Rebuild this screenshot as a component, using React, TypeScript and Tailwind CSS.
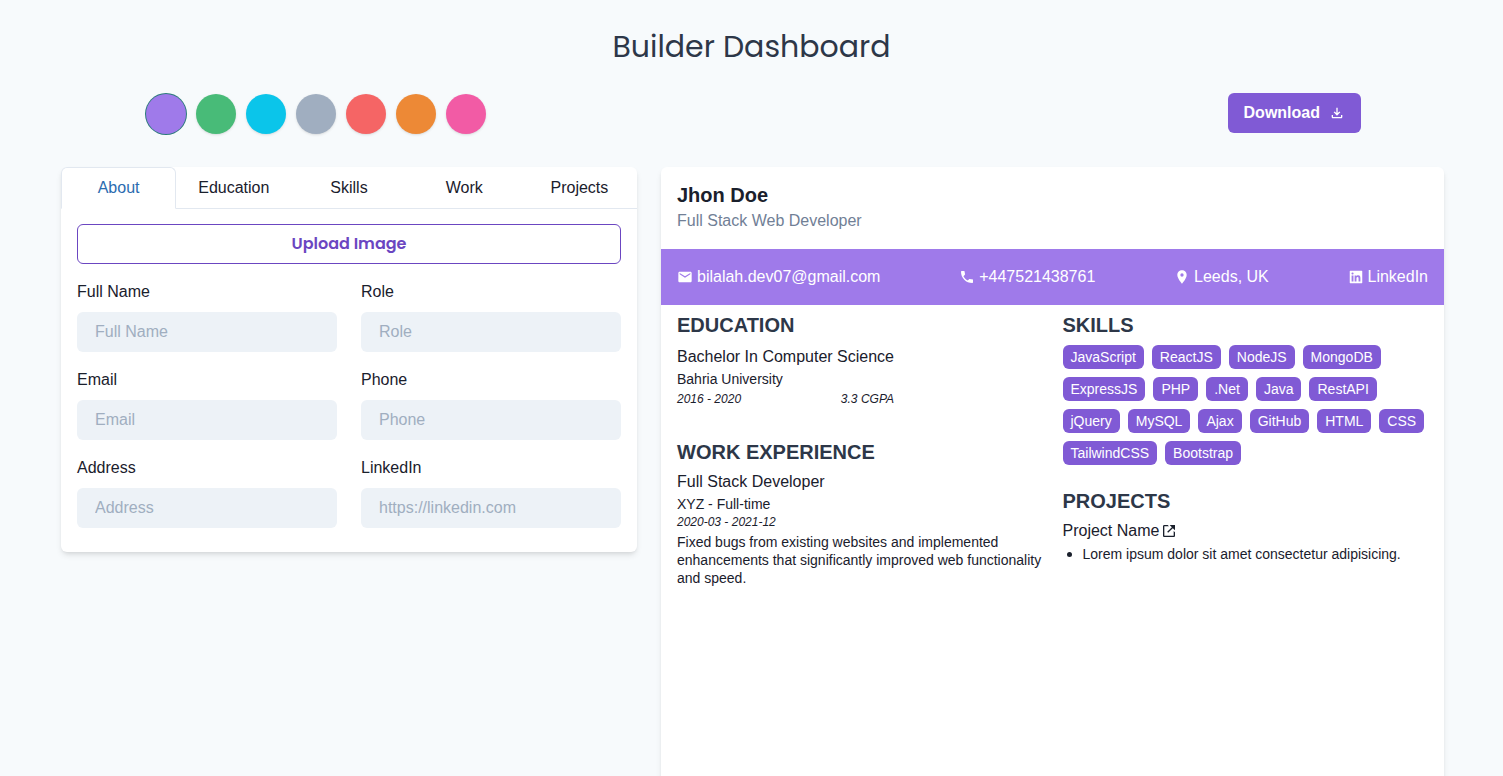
import { useState } from "react";
import { MdEmail, MdPhone, MdLocationOn, MdOutlineFileDownload } from "react-icons/md";
import { AiFillLinkedin } from "react-icons/ai";
import { BiLinkExternal } from "react-icons/bi";

const swatches = [
  { name: "Purple", cls: "bg-[#9f7aea]" },
  { name: "Green", cls: "bg-[#48bb78]" },
  { name: "Cyan", cls: "bg-[#0bc5ea]" },
  { name: "Gray", cls: "bg-[#a0aec0]" },
  { name: "Red", cls: "bg-[#f56565]" },
  { name: "Orange", cls: "bg-[#ed8936]" },
  { name: "Pink", cls: "bg-[#f25ba5]" },
];

const tabs = ["About", "Education", "Skills", "Work", "Projects"];

const fields = [
  { id: "name", label: "Full Name", placeholder: "Full Name", type: "text" },
  { id: "role", label: "Role", placeholder: "Role", type: "text" },
  { id: "email", label: "Email", placeholder: "Email", type: "email" },
  { id: "phone", label: "Phone", placeholder: "Phone", type: "tel" },
  { id: "address", label: "Address", placeholder: "Address", type: "text" },
  { id: "linkedin", label: "LinkedIn", placeholder: "https://linkedin.com", type: "url" },
];

const skills = [
  "JavaScript", "ReactJS", "NodeJS", "MongoDB", "ExpressJS", "PHP", ".Net", "Java", "RestAPI",
  "jQuery", "MySQL", "Ajax", "GitHub", "HTML", "CSS", "TailwindCSS", "Bootstrap",
];

function Toolbar() {
  const [selected, setSelected] = useState(0);
  return (
    <div className="mt-6 flex items-start justify-between pr-[142px] pl-[146px]">
      <div className="flex gap-[10px] pt-px">
        {swatches.map((s, i) => (
          <button
            key={s.name}
            type="button"
            aria-label={s.name}
            aria-pressed={selected === i}
            onClick={() => setSelected(i)}
            className={`size-10 rounded-full ${s.cls} ${selected === i ? "ring-1 ring-[#2c7a7b]" : "shadow-sm"}`}
          />
        ))}
      </div>
      <button type="button" className="flex h-10 items-center gap-[9px] rounded-md bg-[#805ad5] px-4 font-semibold text-white">
        Download
        <MdOutlineFileDownload aria-hidden="true" />
      </button>
    </div>
  );
}

function Editor() {
  const [active, setActive] = useState("About");
  return (
    <section className="rounded-md bg-white pb-6 shadow-md">
      <div role="tablist" className="grid grid-cols-5">
        {tabs.map((t) => (
          <button
            key={t}
            type="button"
            role="tab"
            aria-selected={active === t}
            onClick={() => setActive(t)}
            className={`h-[42px] border-[#e2e8f0] ${
              active === t ? "rounded-t-md border border-b-white text-[#2b6cb0]" : "border-b pt-px"
            }`}
          >
            {t}
          </button>
        ))}
      </div>
      <form className="px-4 pt-[15px]">
        <button
          type="button"
          className="h-10 w-full rounded-md border border-[#6b46c1] font-[Poppins,Inter,sans-serif] font-semibold text-[#6b46c1]"
        >
          Upload Image
        </button>
        <div className="mt-4 grid grid-cols-2 gap-x-6 gap-y-4">
          {fields.map((f) => (
            <div key={f.id}>
              <label htmlFor={f.id} className="mb-2 block">{f.label}</label>
              <input
                id={f.id}
                type={f.type}
                placeholder={f.placeholder}
                className="h-10 w-full rounded-md bg-[#edf2f7] px-[18px] placeholder:text-[#a0aec0]"
              />
            </div>
          ))}
        </div>
      </form>
    </section>
  );
}

function Preview() {
  return (
    <article className="min-h-[1000px] rounded-md bg-white shadow-md">
      <header className="px-4 py-4">
        <h2 className="text-xl leading-6 font-bold">Jhon Doe</h2>
        <p className="mt-[2px] text-[#718096]">Full Stack Web Developer</p>
      </header>
      <address className="flex h-14 items-center justify-between bg-[#9f7aea] px-4 text-white not-italic">
        <a href="mailto:bilalah.dev07@gmail.com" className="flex items-center gap-1"><MdEmail aria-hidden="true" />bilalah.dev07@gmail.com</a>
        <a href="tel:+447521438761" className="flex items-center gap-1"><MdPhone aria-hidden="true" />+447521438761</a>
        <span className="flex items-center gap-1"><MdLocationOn aria-hidden="true" />Leeds, UK</span>
        <a href="https://linkedin.com" className="flex items-center gap-1"><AiFillLinkedin aria-hidden="true" />LinkedIn</a>
      </address>
      <div className="grid grid-cols-2 gap-5 px-4 pt-2">
        <div>
          <section>
            <h3 className="text-xl leading-6 font-bold text-[#2d3748]">EDUCATION</h3>
            <div className="mt-2 w-fit">
              <h4>Bachelor In Computer Science</h4>
              <p className="text-sm leading-5">Bahria University</p>
              <div className="mt-px flex justify-between text-xs leading-[18px] italic">
                <span>2016 - 2020</span>
                <span>3.3 CGPA</span>
              </div>
            </div>
          </section>
          <section className="mt-8">
            <h3 className="text-xl leading-6 font-bold text-[#2d3748]">WORK EXPERIENCE</h3>
            <h4 className="mt-[6px]">Full Stack Developer</h4>
            <p className="text-sm leading-5">XYZ - Full-time</p>
            <p className="text-xs leading-4 italic">2020-03 - 2021-12</p>
            <p className="mt-[3px] text-sm leading-[18px]">
              Fixed bugs from existing websites and implemented enhancements that significantly improved web functionality and speed.
            </p>
          </section>
        </div>
        <div>
          <section>
            <h3 className="text-xl leading-6 font-bold text-[#2d3748]">SKILLS</h3>
            <ul className="mt-2 flex flex-wrap gap-2">
              {skills.map((s) => (
                <li key={s} className="h-6 rounded-md bg-[#805ad5] px-2 text-sm leading-6 text-white">{s}</li>
              ))}
            </ul>
          </section>
          <section className="mt-6">
            <h3 className="text-xl leading-6 font-bold text-[#2d3748]">PROJECTS</h3>
            <h4 className="mt-[6px]">
              <a href="#project" className="flex items-center gap-[2px]">Project Name<BiLinkExternal aria-hidden="true" /></a>
            </h4>
            <ul className="list-disc pl-5 leading-[22px]">
              <li><span className="text-sm leading-[22px]">Lorem ipsum dolor sit amet consectetur adipisicing.</span></li>
            </ul>
          </section>
        </div>
      </div>
    </article>
  );
}

export default function App() {
  return (
    <main className="h-screen overflow-hidden bg-[#f7fafc] pt-6 font-['Liberation_Sans',Arial,sans-serif] text-base text-[#1a202c]">
      <h1 className="text-center font-[Poppins,Inter,sans-serif] text-[30px] leading-[45px] text-[#2d3748]">Builder Dashboard</h1>
      <Toolbar />
      <div className="mt-[33px] grid grid-cols-[576fr_783fr] items-start gap-6 pr-[59px] pl-[61px]">
        <Editor />
        <Preview />
      </div>
    </main>
  );
}
